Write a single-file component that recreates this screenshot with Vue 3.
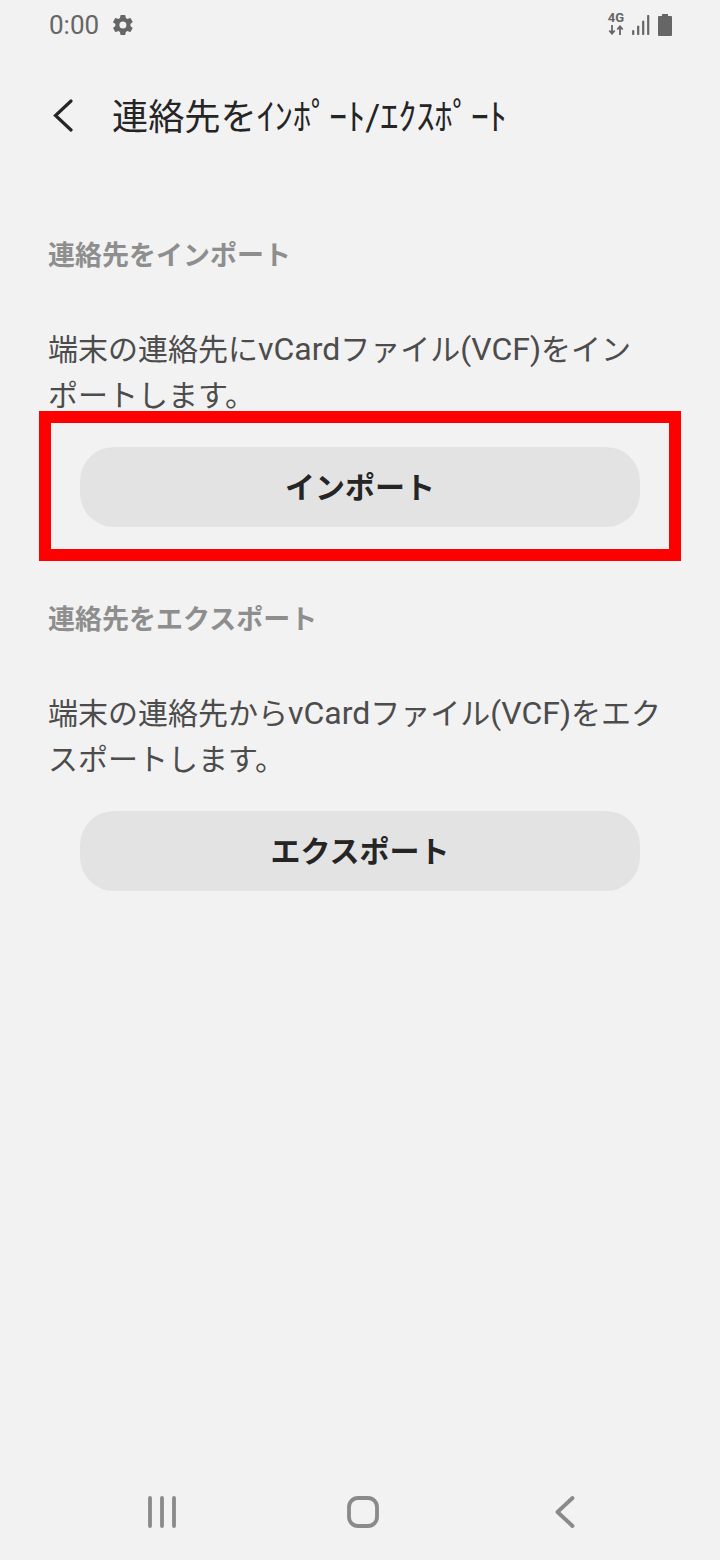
<script setup>
const toParts = (text) =>
  text.split(/([A-Za-z()]+)/).filter(Boolean).map((t) => ({ t, latin: /^[A-Za-z()]+$/.test(t) }))

const sections = [
  { id: 'import', heading: '連絡先をインポート', body: toParts('端末の連絡先にvCardファイル(VCF)をインポートします。'), action: 'インポート', marked: true },
  { id: 'export', heading: '連絡先をエクスポート', body: toParts('端末の連絡先からvCardファイル(VCF)をエクスポートします。'), action: 'エクスポート', marked: false },
]
</script>

<template>
  <div class="screen" lang="ja">
    <div class="status">
      <div class="status-left">
        <span class="time">0:00</span>
        <svg class="gear" viewBox="0 0 24 24" width="24" height="24">
          <path fill="#666" d="M19.4 13c.04-.33.06-.66.06-1s-.02-.67-.07-1l2.1-1.64a.5.5 0 0 0 .12-.64l-2-3.46a.5.5 0 0 0-.61-.22l-2.49 1a7.3 7.3 0 0 0-1.73-1l-.38-2.65A.49.49 0 0 0 13.9 2h-4a.49.49 0 0 0-.49.42L9 5.07a7.7 7.7 0 0 0-1.72 1l-2.5-1a.49.49 0 0 0-.61.22l-2 3.46a.49.49 0 0 0 .12.64L4.4 11c-.05.33-.08.67-.08 1s.03.67.08 1l-2.11 1.64a.5.5 0 0 0-.12.64l2 3.46c.12.22.38.3.61.22l2.5-1c.52.4 1.09.74 1.72 1l.38 2.65c.04.24.25.42.49.42h4c.25 0 .46-.18.49-.42l.38-2.65a7.7 7.7 0 0 0 1.73-1l2.49 1c.23.09.49 0 .61-.22l2-3.46a.5.5 0 0 0-.12-.64zM11.9 15.5a3.5 3.5 0 1 1 0-7 3.5 3.5 0 0 1 0 7z"/>
        </svg>
      </div>
      <div class="status-right">
        <div class="net">
          <span class="net-label">4G</span>
          <svg viewBox="0 0 16 10" width="16" height="10">
            <path d="M4 0v8.500M1.300 5.500 4 8.700l2.700-3.200M12 10V1.500M9.300 4.500 12 1.300l2.700 3.200" fill="none" stroke="#666" stroke-width="1.800"/>
          </svg>
        </div>
        <svg class="signal" viewBox="0 0 18 20" width="18" height="20">
          <path d="M1.2 16v3M6.2 11.500v7.500M11.200 6.500v12.500M16.200 1v18" stroke="#666" stroke-width="2.200" stroke-linecap="round" fill="none"/>
        </svg>
        <svg class="battery" viewBox="0 0 14 22" width="14" height="22">
          <path fill="#666" d="M4 0h6v2h3a1 1 0 0 1 1 1v18a1 1 0 0 1-1 1H1a1 1 0 0 1-1-1V3a1 1 0 0 1 1-1h3z"/>
        </svg>
      </div>
    </div>

    <header class="appbar">
      <svg class="back" viewBox="0 0 24 36" width="24" height="36">
        <path d="M20 2 4.500 16.500 20 31" fill="none" stroke="#252525" stroke-width="3.200" stroke-linecap="round"/>
      </svg>
      <h1 class="title">連絡先をｲﾝﾎﾟｰﾄ/ｴｸｽﾎﾟｰﾄ</h1>
    </header>

    <main class="content">
      <section v-for="s in sections" :key="s.id" class="block">
        <h2 class="heading">{{ s.heading }}</h2>
        <p class="body"><template v-for="(p, i) in s.body" :key="i"><span v-if="p.latin" class="latin">{{ p.t }}</span><template v-else>{{ p.t }}</template></template></p>
        <div class="action" :class="{ marked: s.marked }">
          <button class="btn" type="button">{{ s.action }}</button>
        </div>
      </section>
    </main>

    <nav class="navbar">
      <svg viewBox="0 0 30 32" width="30" height="32">
        <path d="M3 2v28M15 2v28M27 2v28" stroke="#8a8a8a" stroke-width="3.800" stroke-linecap="round" fill="none"/>
      </svg>
      <svg viewBox="0 0 32 32" width="32" height="32">
        <rect x="2" y="2" width="28" height="28" rx="9" fill="none" stroke="#8a8a8a" stroke-width="3.800"/>
      </svg>
      <svg class="nav-back" viewBox="0 0 20 32" width="20" height="32">
        <path d="M17.500 2 2.500 16l15 14" stroke="#8a8a8a" stroke-width="3.800" stroke-linecap="round" stroke-linejoin="round" fill="none"/>
      </svg>
    </nav>
  </div>
</template>

<style>
html, body { margin: 0; background: #f2f2f2; }
</style>

<style scoped>
.screen {
  width: 720px;
  height: 1560px;
  background: #f2f2f2;
  display: flex;
  flex-direction: column;
  font-family: "Roboto", "Noto Sans CJK JP", sans-serif;
  overflow: hidden;
}
.status {
  height: 50px;
  padding: 0 48px 0 49px;
  display: flex;
  align-items: center;
  justify-content: space-between;
  color: #666;
}
.status-left { display: flex; align-items: center; gap: 12px; }
.time { font-size: 26px; line-height: 50px; }
.status-right { display: flex; align-items: center; gap: 8px; }
.net { display: flex; flex-direction: column; align-items: center; width: 16px; gap: 2px; margin-top: -2px; }
.net-label { font-size: 13px; line-height: 10px; font-weight: 700; color: #666; }
.appbar {
  height: 134px;
  padding-left: 51px;
  display: flex;
  align-items: center;
  gap: 37px;
}
.title {
  margin: 2px 0 0;
  font-size: 36.2px;
  font-weight: 400;
  color: #252525;
  line-height: 46px;
  white-space: nowrap;
}
.content { flex: 1; padding-top: 13px; }
.block { display: flex; flex-direction: column; }
.heading {
  margin: 0;
  padding: 40px 49px 0 48px;
  font-size: 27px;
  line-height: 38px;
  font-weight: 700;
  color: #8e8e8e;
}
.body {
  margin: 0;
  padding: 49px 49px 0 48px;
  font-family: "Noto Sans CJK JP", sans-serif;
  font-size: 30px;
  line-height: 46px;
  color: #4c4c4c;
  line-break: strict;
}
.latin {
  font-family: "Roboto", sans-serif;
  font-size: 32px;
  line-height: 0;
}
.action {
  height: 150px;
  margin: -5px 39px 0;
  padding: 24px 29px 0;
  box-sizing: border-box;
  border: 12px solid transparent;
}
.action.marked { border-color: #ff0000; }
.btn {
  display: block;
  width: 100%;
  height: 80px;
  padding: 0 0 4px;
  border: 0;
  border-radius: 34px;
  background: #e3e3e3;
  font: inherit;
  font-size: 30px;
  font-weight: 700;
  color: #252525;
}
.navbar {
  height: 96px;
  flex: none;
  padding: 0 145px 0 147px;
  display: flex;
  align-items: center;
  justify-content: space-between;
}
.nav-back { margin-left: 6px; }
</style>
